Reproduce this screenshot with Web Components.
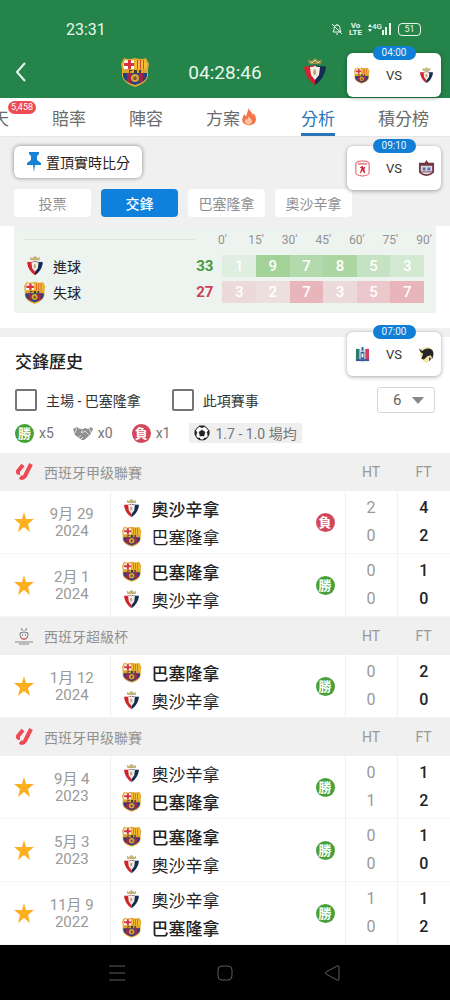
<!DOCTYPE html>
<html lang="zh-Hant">
<head>
<meta charset="UTF-8">
<meta name="viewport" content="width=device-width, initial-scale=1">
<title>交鋒歷史</title>
<style>
    body {
        margin: 0;
        background: #fff;
        color: #222;
        font-family: Roboto, "Noto Sans CJK TC", sans-serif;
        font-size: 14px;
    }
</style>
</head>
<body>
<match-page></match-page>

<template id="match-page-template">
    <style>
        :host {
            display: flex;
            flex-direction: column;
            min-height: 100vh;
            position: relative;
        }
        main { flex: 1; }
        .divider { height: 9px; margin-top: 15px; background: #f0f0f0; }
        .float { position: absolute; right: 9px; }
        .first { top: 46px; }
        .second { top: 139px; }
        .third { top: 325px; }
    </style>
    <match-header></match-header>
    <tab-bar></tab-bar>
    <sub-bar></sub-bar>
    <main>
        <goal-stats></goal-stats>
        <div class="divider"></div>
        <history-filter></history-filter>
        <league-table league="0"></league-table>
        <league-table league="1"></league-table>
        <league-table league="2"></league-table>
    </main>
    <system-nav></system-nav>
    <float-match class="float first" home="barca" away="osasuna">04:00</float-match>
    <float-match class="float second" home="america" away="estudiantes">09:10</float-match>
    <float-match class="float third" home="once" away="bull">07:00</float-match>
</template>

<template id="match-header-template">
    <style>
        :host { display: block; background: #24844a; color: #e9f7ec; }
        .status {
            display: flex;
            align-items: center;
            justify-content: space-between;
            height: 34px;
            padding: 12px 29px 0 66px;
        }
        .clock { font-size: 16px; }
        .icons { display: flex; align-items: center; gap: 6px; }
        .volte { font-size: 8px; line-height: 7px; font-weight: 700; text-align: center; }
        .signal { display: flex; align-items: center; }
        .signal span { font-size: 8px; line-height: 8px; align-self: flex-start; font-weight: 500; }
        .battery {
            display: flex;
            align-items: center;
            justify-content: center;
            width: 21px;
            height: 11px;
            border: 1px solid #e9f7ec;
            border-radius: 4px;
            font-size: 9px;
        }
        .title {
            display: grid;
            grid-template-columns: repeat(5, 1fr);
            align-items: center;
            justify-items: center;
            height: 52px;
        }
        button { justify-self: start; margin-left: 14px; padding: 0; border: 0; background: none; color: inherit; display: flex; }
        time { font-size: 19px; }
    </style>
    <div class="status">
        <span class="clock">23:31</span>
        <div class="icons">
            <svg width="12" height="12" viewBox="0 0 12 12" fill="none" stroke="currentColor">
                <path d="M2 9h8L9 7V5a3 3 0 0 0-6 0v2zM5 11h2M6 2V1M1 1l10 10"/>
            </svg>
            <div class="volte">Vo<br>LTE</div>
            <div class="signal">
                <svg width="4" height="12" viewBox="0 0 4 12" fill="currentColor"><path d="M0 4l2-3 2 3zM0 6h4l-2 3z"/></svg>
                <span>4G</span>
                <svg width="10" height="12" viewBox="0 0 10 12" fill="currentColor"><path d="M0 7h2v5H0zM3 4h2v8H3zM7 0h2v12H7z"/></svg>
            </div>
            <div class="battery">51</div>
        </div>
    </div>
    <div class="title">
        <button aria-label="返回">
            <svg width="14" height="20" viewBox="0 0 14 20" fill="none" stroke="currentColor" stroke-width="2"><path d="M11 1L3 10l8 9"/></svg>
        </button>
        <club-crest name="barca" size="30"></club-crest>
        <time>04:28:46</time>
        <club-crest name="osasuna" size="28"></club-crest>
    </div>
</template>

<template id="tab-bar-template">
    <style>
        :host { display: block; background: #fff; border-bottom: 1px solid #e6e6e6; overflow: hidden; }
        nav { display: flex; gap: 43px; height: 38px; margin-left: -8px; }
        a {
            position: relative;
            display: flex;
            align-items: center;
            flex: none;
            padding-top: 3px;
            border-bottom: 3px solid transparent;
            box-sizing: border-box;
            color: #6c6c6c;
            font-size: 17px;
            text-decoration: none;
        }
        a.active { color: #2a76b9; border-color: #2a76b9; }
        .count {
            position: absolute;
            left: 16px;
            top: 3px;
            padding: 0 3px;
            border-radius: 7px;
            background: #ee4b52;
            color: #fff;
            font-size: 9px;
            line-height: 13px;
        }
    </style>
    <nav>
        <a href="#chat">天<span class="count">5,458</span></a>
        <a href="#odds">賠率</a>
        <a href="#lineup">陣容</a>
        <a href="#tips">方案<svg width="18" height="18" viewBox="0 0 17 17">
            <path d="M8 0c1 3 4 4 4 7l1-2c2 3 3 6 1 9-2 3-9 3-11 0-2-3 0-6 1-8l2 2c0-3 2-5 2-8z" fill="#f4734a"/>
            <path d="M8 8c2 2 4 3 3 6-1 2-5 2-6 0-1-2 0-3 1-4l1 1z" fill="#ffc5a0"/>
        </svg></a>
        <a href="#analysis" class="active">分析</a>
        <a href="#table">積分榜</a>
    </nav>
</template>

<template id="sub-bar-template">
    <style>
        :host { display: block; background: #f0f0f0; padding: 9px 14px 9px; }
        button { border: 0; font: inherit; white-space: nowrap; }
        .pin {
            display: flex;
            align-items: center;
            gap: 4px;
            height: 32px;
            padding: 0 12px;
            border-radius: 6px;
            background: #fff;
            box-shadow: 0 0 4px rgba(0, 0, 0, .45);
            color: #222;
        }
        .chips { display: flex; gap: 10px; margin-top: 11px; }
        .chips button {
            width: 77px;
            height: 28px;
            padding: 0;
            border-radius: 4px;
            background: #fff;
            color: #8f8f8f;
        }
        .chips .active { background: #0f80db; color: #fff; font-weight: 500; }
    </style>
    <button class="pin">
        <svg width="16" height="20" viewBox="0 0 16 20" fill="#1781d6">
            <path d="M3 0h10v2l-2 2v4l4 3v2H9l-1 7-1-7H1v-2l4-3V4L3 2z"/>
        </svg>置頂實時比分
    </button>
    <div class="chips">
        <button>投票</button>
        <button class="active">交鋒</button>
        <button>巴塞隆拿</button>
        <button>奧沙辛拿</button>
    </div>
</template>

<template id="goal-stats-template">
    <style>
        :host { display: block; margin: 0 14px; padding: 0 12px 8px 10px; background: #edf3ef; border-radius: 0 0 3px 3px; }
        table { width: 100%; border-collapse: collapse; table-layout: fixed; }
        th, td { padding: 0; height: 26px; font-weight: 400; }
        thead th { height: 27px; }
        .bin { width: 8.4%; }
        .value { width: 42px; }
        hr { margin: 0 -15px 0 0; border: 0; border-top: 1px solid #dde3df; }
        .axis { display: flex; justify-content: space-between; margin: 0 -11px; color: #929292; font-size: 12px; }
        .axis span { width: 22px; text-align: center; }
        .team { display: flex; align-items: center; gap: 7px; height: 26px; }
        .team club-crest { width: 22px; }
        .total { padding-right: 9px; text-align: right; font-size: 15px; font-weight: 700; }
        .scored .total { color: #45983b; }
        .missed .total { color: #cc4257; }
        .cell { background: var(--shade); color: #fff; text-align: center; font-size: 15px; font-weight: 500; line-height: 22px; }
    </style>
    <table>
        <colgroup>
            <col><col class="value">
            <col class="bin"><col class="bin"><col class="bin"><col class="bin"><col class="bin"><col class="bin">
        </colgroup>
        <thead>
            <tr>
                <th><hr></th>
                <th></th>
                <th colspan="6"><div class="axis"><span>0'</span><span>15'</span><span>30'</span><span>45'</span><span>60'</span><span>75'</span><span>90'</span></div></th>
            </tr>
        </thead>
        <tbody></tbody>
    </table>
</template>

<template id="history-filter-template">
    <style>
        :host { display: block; padding: 0 15px 10px; }
        h2 { margin: 0; font-size: 17px; font-weight: 500; line-height: 50px; }
        .row { display: flex; align-items: center; }
        .row label { display: flex; align-items: center; gap: 9px; margin-right: 31px; color: #333; }
        input {
            appearance: none;
            width: 22px;
            height: 22px;
            margin: 0;
            border: 2px solid #757575;
            border-radius: 2px;
        }
        .pick { position: relative; margin-left: auto; }
        .pick::after {
            content: "";
            position: absolute;
            right: 11px;
            top: 10px;
            border: 6px solid transparent;
            border-top: 7px solid #888;
            border-bottom: 0;
            pointer-events: none;
        }
        select {
            appearance: none;
            display: block;
            width: 58px;
            height: 26px;
            padding: 0 0 0 15px;
            border: 1px solid #d6d6d6;
            border-radius: 3px;
            background: #fff;
            color: #666;
            font: inherit;
            font-size: 15px;
        }
        .legend { display: flex; align-items: center; gap: 19px; margin-top: 10px; height: 20px; color: #757575; }
        .legend span { display: flex; align-items: center; gap: 5px; }
        .legend .average { height: 20px; padding: 0 5px; background: #efefef; }
    </style>
    <h2>交鋒歷史</h2>
    <div class="row">
        <label><input type="checkbox">主場 - 巴塞隆拿</label>
        <label><input type="checkbox">此項賽事</label>
        <div class="pick"><select aria-label="場數"><option>6</option><option>10</option><option>20</option></select></div>
    </div>
    <div class="legend">
        <span><result-badge type="win"></result-badge>x5</span>
        <span><svg width="20" height="13" viewBox="0 0 20 13">
            <path d="M0 2l4-2 3 2h3l2-1 3 1 3-2 2 2-3 6-6 5h-2L2 8z" fill="#909090"/>
            <path d="M4 1L2 6M16 1l2 5M10 3L8 5l1 1 3-2 4 4M6 10l2-2M8 12l2-2" fill="none" stroke="#fff" stroke-width=".7"/>
        </svg>x0</span>
        <span><result-badge type="loss"></result-badge>x1</span>
        <span class="average"><svg width="16" height="16" viewBox="0 0 16 16">
            <circle cx="8" cy="8" r="7" fill="#fff" stroke="#222" stroke-width="1"/>
            <path d="M8 5l3 2-1 4H6L5 7zM5 1h6L8 3zM1 5l2 2-1 4-1-2zM15 5l-2 2 1 4 1-2zM3 13l3 0 0 2zM13 13h-3v2z" fill="#222" stroke="#222" stroke-width=".5"/>
        </svg>1.7 - 1.0 場均</span>
    </div>
</template>

<template id="league-table-template">
    <style>
        :host { display: block; }
        table { width: 100%; border-collapse: collapse; table-layout: fixed; }
        th, td { padding: 0; }
        thead th { height: 38px; background: #f0f0f0; color: #999; font-weight: 400; }
        thead .league { color: #929292; text-align: left; }
        .league div { display: flex; align-items: center; gap: 10px; padding-left: 14px; }
        .league club-crest { width: 20px; }
        .star { width: 48px; }
        .date { width: 62px; }
        .half { width: 52px; }
        .full { width: 53px; }
        tbody td { height: 62px; border-bottom: 1px solid #f5f5f5; text-align: center; }
        td.date { padding: 2px 14px 0 0; box-sizing: border-box; border-right: 1px solid #f0f0f0; color: #999; font-size: 15px; line-height: 17px; }
        td.half, td.full { font-size: 16px; line-height: 28px; border-left: 1px solid #f0f0f0; }
        td.half { color: #999; }
        td.full { color: #222; font-weight: 500; }
        .star button { display: block; margin: 0 auto; padding: 0; border: 0; background: none; line-height: 0; }
        .match { display: flex; align-items: center; padding: 0 10px; }
        .teams { flex: 1; }
        .team { display: flex; align-items: center; gap: 9px; height: 28px; font-size: 17px; }
        .team club-crest { width: 22px; }
        .winner { font-weight: 500; }
    </style>
    <table>
        <colgroup><col class="star"><col class="date"><col><col class="half"><col class="full"></colgroup>
        <thead>
            <tr>
                <th class="league" colspan="3"><div><club-crest size="18"></club-crest><span></span></div></th>
                <th>HT</th>
                <th>FT</th>
            </tr>
        </thead>
        <tbody></tbody>
    </table>
</template>

<template id="result-badge-template">
    <style>
        :host {
            display: inline-flex;
            align-items: center;
            justify-content: center;
            flex: none;
            width: 19px;
            height: 19px;
            border-radius: 50%;
            background: #48a038;
            color: #fff;
            font-size: 13px;
            font-weight: 700;
            line-height: 17px;
        }
        :host([type="loss"]) { background: #d2475a; }
    </style>
    <span></span>
</template>

<template id="float-match-template">
    <style>
        :host { display: block; width: 94px; }
        .time {
            position: relative;
            display: block;
            width: 43px;
            margin: 0 auto -7px;
            border-radius: 7px;
            background: #117fd6;
            color: #e8f4ff;
            font-size: 10px;
            line-height: 14px;
            text-align: center;
        }
        .card {
            display: flex;
            align-items: center;
            justify-content: space-between;
            height: 44px;
            padding: 0 5px;
            border-radius: 6px;
            background: #fff;
            box-shadow: 0 1px 4px rgba(0, 0, 0, .35);
            color: #333;
            font-size: 13px;
        }
        club-crest { width: 20px; }
    </style>
    <span class="time"><slot></slot></span>
    <div class="card"><club-crest class="home" size="17"></club-crest><span>VS</span><club-crest class="away" size="17"></club-crest></div>
</template>

<template id="system-nav-template">
    <style>
        :host { display: flex; justify-content: center; gap: 86px; height: 55px; background: #000; }
        button { width: 22px; padding: 0; border: 0; background: none; }
        svg { display: block; fill: none; stroke: #5c5c5c; }
    </style>
    <button aria-label="最近"><svg width="22" height="18" viewBox="0 0 22 18"><path d="M3 2h16M3 9h16M3 16h16"/></svg></button>
    <button aria-label="主頁"><svg width="22" height="18" viewBox="0 0 22 18"><rect x="4" y="2" width="14" height="14" rx="4"/></svg></button>
    <button aria-label="返回"><svg width="22" height="18" viewBox="0 0 22 18"><path d="M17 3v12q0 2-2 1L4 10q-1-1 0-2L15 2q2-1 2 1z"/></svg></button>
</template>

<script>
    // Crest drawings, each as [viewBox width, viewBox height, markup]
    const crests = {
        barca: [29, 30, `
            <path d="M3 1q4 2 11 0 7 2 11 0l3 6-1 5v7q-1 7-13 11Q2 26 1 19v-7L0 7z" fill="#e0aa35"/>
            <path d="M4 3q5 1 9 0v9H3L2 8z" fill="#fff"/>
            <path d="M7 3h3v9H7zM3 6h10v3H3z" fill="#d8343b"/>
            <path d="M14 3q6 1 10 0l2 5-1 4H14z" fill="#f6bf33"/>
            <path d="M16 3h1v9h-1zM19 3h1v9h-1zM22 3h1v9h-1z" fill="#d2492f"/>
            <path d="M3 12h22v4H3z" fill="#dba52d"/>
            <path d="M8 13h3v1H9v2H8zM13 13h3v3h-3zM18 13h2v3h-2z" fill="#4d3a26"/>
            <path d="M2 16h24v3q-1 6-12 9Q3 25 2 19z" fill="#26417f"/>
            <path d="M6 16h4v11l-4-3zM18 16h4v8l-4 3z" fill="#a22649"/>
            <circle cx="14" cy="21" r="4" fill="#d8a536"/>
            <path d="M14 19l2 2-1 2h-2l-1-2z" fill="#76592b"/>`],
        osasuna: [22, 28, `
            <path d="M4 1l3 2 4-3 4 3 3-2-1 5H5z" fill="#a9954f" opacity=".8"/>
            <path d="M6 3l2 2 3-3 3 3 2-2" fill="none" stroke="#e6d18a"/>
            <path d="M1 8q6 1 10-1v20Q2 21 0 10z" fill="#cf2530"/>
            <path d="M21 8q-6 1-10-1v20q9-6 11-17z" fill="#152d53"/>
            <path d="M6 9q5 0 5-2 0 2 5 2l-1 8-4 5-4-5z" fill="#f4f0e9"/>
            <path d="M10 11l2 1v3l1 2-2-1-1 2-1-4z" fill="#c5a173"/>`],
        america: [18, 18, `
            <path d="M2 3q1-2 7-2t7 2v11q0 2-7 3-7-1-7-3z" fill="#fff" stroke="#dc4a55"/>
            <path d="M4 3h10v2H4z" fill="#e88a91"/>
            <path d="M9 6l1 2 2-1-1 3 1 4h-1l-2-3-2 3H6l2-5-2-1 2-1z" fill="#c92938"/>`],
        estudiantes: [18, 18, `
            <path d="M9 0l2 3h6v10q-2 3-8 4-6-1-8-4V3h6z" fill="#733744"/>
            <path d="M3 6h12v6q-1 3-6 3-5 0-6-3z" fill="#d4d9e7"/>
            <path d="M5 8h3v3H5zM10 8h3v3h-3z" fill="#596ba0"/>
            <path d="M3 12h12v1H3z" fill="#9b485b"/>`],
        once: [16, 18, `
            <path d="M1 3h4v13H1z" fill="#2b7d6b"/>
            <path d="M5 3h6v13l-3 2-3-2z" fill="#dce8f1"/>
            <path d="M11 3h4v13h-4z" fill="#d23f58"/>
            <path d="M1 14h14v2H1z" fill="#35569b"/>
            <path d="M7 1h2v4H7zM6 6h4v8H6z" fill="#345f98"/>
            <path d="M7 8h2v4H7z" fill="#fff"/>`],
        bull: [20, 20, `
            <path d="M2 4l8-3 8 3-1 11-7 5-7-5z" fill="#efe7a5"/>
            <path d="M1 3l4 3q3-4 8-3 6 1 5 8l-1 4-2-4-4 1-4 4-3-1 2-6-3-2z" fill="#25252a"/>
            <path d="M13 13l3 2-3 3z" fill="#4a4a43"/>`],
        laliga: [18, 18, `
            <path d="M8 2L3 8q-1 2 2 2" fill="none" stroke="#ee4952" stroke-width="4"/>
            <path d="M16 1L10 13q-2 3-5 1" fill="none" stroke="#ee4952" stroke-width="4"/>`],
        supercup: [20, 18, `
            <path d="M7 1l2 3M13 1l-2 3M6 6q0 6 4 6t4-6q-4-2-8 0z" fill="none" stroke="#777"/>
            <path d="M8 8h1M11 8h1" stroke="#555"/>
            <path d="M6 10q4 5 8 0" fill="none" stroke="#e4656a"/>
            <path d="M1 15h18M5 17h10" stroke="#888"/>`],
    };

    const clubs = { barca: '巴塞隆拿', osasuna: '奧沙辛拿' };

    const goals = [
        { type: 'scored', label: '進球', crest: 'osasuna', total: 33, bins: [1, 9, 7, 8, 5, 3],
          shades: ['#dfeee0', '#a2d298', '#b3daac', '#abd6a2', '#c5e2c2', '#d3e9d2'] },
        { type: 'missed', label: '失球', crest: 'barca', total: 27, bins: [3, 2, 7, 3, 5, 7],
          shades: ['#ecd9da', '#ecdfde', '#e7b5ba', '#ecd9da', '#ebc8cb', '#e7b5ba'] },
    ];

    // match: [day, year, result, [club, HT, FT, won], [club, HT, FT, won]]
    const leagues = [
        { name: '西班牙甲级聯賽', crest: 'laliga', matches: [
            ['9月 29', 2024, 'loss', ['osasuna', 2, 4, true], ['barca', 0, 2, false]],
            ['2月 1', 2024, 'win', ['barca', 0, 1, true], ['osasuna', 0, 0, false]],
        ] },
        { name: '西班牙超級杯', crest: 'supercup', matches: [
            ['1月 12', 2024, 'win', ['barca', 0, 2, true], ['osasuna', 0, 0, false]],
        ] },
        { name: '西班牙甲级聯賽', crest: 'laliga', matches: [
            ['9月 4', 2023, 'win', ['osasuna', 0, 1, false], ['barca', 1, 2, true]],
            ['5月 3', 2023, 'win', ['barca', 0, 1, true], ['osasuna', 0, 0, false]],
            ['11月 9', 2022, 'win', ['osasuna', 1, 1, false], ['barca', 0, 2, true]],
        ] },
    ];

    class TemplateElement extends HTMLElement {
        constructor() {
            super();
            const template = document.getElementById(this.localName + '-template').content;
            this.attachShadow({ mode: 'open' }).appendChild(template.cloneNode(true));
        }
    }

    class ClubCrest extends HTMLElement {
        static observedAttributes = ['name'];

        constructor() {
            super();
            this.attachShadow({ mode: 'open' });
        }

        attributeChangedCallback() {
            const [width, height, markup] = crests[this.getAttribute('name')];
            const size = this.getAttribute('size') || 20;
            this.shadowRoot.innerHTML = `
                <style>
                    :host { display: inline-flex; justify-content: center; flex: none; }
                    svg { display: block; }
                </style>
                <svg height="${size}" width="${Math.round(size * width / height)}" viewBox="0 0 ${width} ${height}" aria-hidden="true">${markup}</svg>`;
        }
    }

    class GoalStats extends TemplateElement {
        connectedCallback() {
            this.shadowRoot.querySelector('tbody').innerHTML = goals.map(row => `
                <tr class="${row.type}">
                    <th><div class="team"><club-crest size="${row.crest === 'barca' ? 23 : 20}" name="${row.crest}"></club-crest>${row.label}</div></th>
                    <td class="total">${row.total}</td>
                    ${row.bins.map((n, i) => `<td><div class="cell" style="--shade: ${row.shades[i]}">${n}</div></td>`).join('')}
                </tr>`).join('');
        }
    }

    class LeagueTable extends TemplateElement {
        connectedCallback() {
            const league = leagues[this.getAttribute('league')];
            const root = this.shadowRoot;
            root.querySelector('.league club-crest').setAttribute('name', league.crest);
            root.querySelector('.league span').textContent = league.name;
            root.querySelector('tbody').innerHTML = league.matches.map(([day, year, result, home, away]) => `
                <tr>
                    <td class="star"><button aria-label="收藏"><svg width="20" height="20" viewBox="0 0 20 20"><path d="M10 0l2 7h8l-6 5 2 8-6-5-6 5 2-8-6-5h8z" fill="#fbb01f"/></svg></button></td>
                    <td class="date">${day}<br>${year}</td>
                    <td><div class="match">
                        <div class="teams">${this.team(home)}${this.team(away)}</div>
                        <result-badge type="${result}"></result-badge>
                    </div></td>
                    <td class="half">${home[1]}<br>${away[1]}</td>
                    <td class="full">${home[2]}<br>${away[2]}</td>
                </tr>`).join('');
        }

        team([club, , , won]) {
            return `<div class="team${won ? ' winner' : ''}"><club-crest size="${club === 'barca' ? 21 : 19}" name="${club}"></club-crest>${clubs[club]}</div>`;
        }
    }

    class ResultBadge extends TemplateElement {
        connectedCallback() {
            this.shadowRoot.querySelector('span').textContent = this.getAttribute('type') === 'win' ? '勝' : '負';
        }
    }

    class FloatMatch extends TemplateElement {
        connectedCallback() {
            this.shadowRoot.querySelector('.home').setAttribute('name', this.getAttribute('home'));
            this.shadowRoot.querySelector('.away').setAttribute('name', this.getAttribute('away'));
        }
    }

    customElements.define('club-crest', ClubCrest);
    customElements.define('result-badge', ResultBadge);
    customElements.define('float-match', FloatMatch);
    customElements.define('match-header', class extends TemplateElement {});
    customElements.define('tab-bar', class extends TemplateElement {});
    customElements.define('sub-bar', class extends TemplateElement {});
    customElements.define('goal-stats', GoalStats);
    customElements.define('history-filter', class extends TemplateElement {});
    customElements.define('league-table', LeagueTable);
    customElements.define('system-nav', class extends TemplateElement {});
    customElements.define('match-page', class extends TemplateElement {});
</script>
</body>
</html>
